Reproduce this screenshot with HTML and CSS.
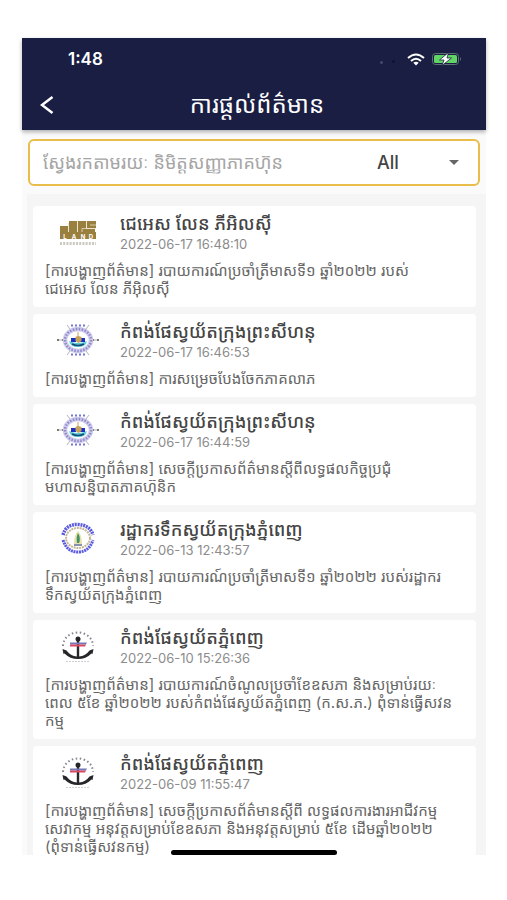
FILE: index.html
```html
<!DOCTYPE html>
<html lang="km">
<head>
<meta charset="utf-8">
<meta name="viewport" content="width=device-width, initial-scale=1">
<title>ការផ្ដល់ព័ត៌មាន</title>
<link rel="stylesheet" href="styles.css">
</head>
<body>
<svg class="defs" aria-hidden="true">
  <defs>
    <symbol id="logo-land" viewBox="0 0 42 36">
      <path fill="#9a803f" d="M3 12h8v9H3zM12 7h8v14h-8zM21 7h8v8h9v6H21zM30 7h9v7h-9zM3 18h36v7H3z"/>
      <path d="M11.500 9v9M20.500 7v11M29.500 7v7.500H39M25 18v-3.500h5M33 11h6" fill="none" stroke="#e9dfc3" stroke-width=".8"/>
      <g class="land-word"><text x="8" y="24.500">L</text><text x="17" y="24.500">A</text><text x="26" y="24.500">N</text><text x="34" y="24.500">D</text></g>
      <path d="M3 29.500h36" stroke="#cbc9c0" stroke-width="3" stroke-dasharray="2 1.200"/>
    </symbol>
    <symbol id="logo-port" viewBox="0 0 42 36">
      <path d="M0 18h42M10 3l22 30M32 3L10 33" stroke="#b4b6b0" stroke-width="1"/>
      <path d="M0 18h2M40 18h2M5 18h2M35 18h2" stroke="#77796f" stroke-width="2"/>
      <path d="M14 3.500h14M14 32.500h14" stroke="#7474d9" stroke-width="2" stroke-dasharray="2 2"/>
      <ellipse cx="21" cy="18" rx="13" ry="11" fill="#fff" stroke="#cfccec" stroke-width="4.500"/>
      <ellipse cx="21" cy="18" rx="13" ry="11" fill="none" stroke="#8f8ac9" stroke-width="2.500" stroke-dasharray="1.500 1.500"/>
      <path d="M12 19q9 4 18 0-1 6-9 6t-9-6z" fill="#62cbd8"/>
      <path d="M14 16h5v4h-5zM23 16h5v4h-5z" fill="#1930c4"/>
      <path d="M20.500 10h1v4l3 1v4l-3 2-3-2v-4l2-1z" fill="#c6a15c"/>
      <path d="M15 22q6 3 12 0" fill="none" stroke="#164c76" stroke-width="1.500"/>
    </symbol>
    <symbol id="logo-water" viewBox="0 0 42 36">
      <path d="M6 15Q9 4 21 4.500T36 15" fill="none" stroke="#5b5bdf" stroke-width="3.500" stroke-dasharray="2 .8"/>
      <path d="M6 20q4 12 15 12t15-12" fill="none" stroke="#5b5be2" stroke-width="3" stroke-dasharray="2 .7"/>
      <ellipse cx="21" cy="18" rx="12" ry="10" fill="#fff" stroke="#c4b796" stroke-width="2" stroke-dasharray="2 .8"/>
      <path d="M17 24q0-9 4-13 4 4 4 13z" fill="#e8e1ad"/>
      <path d="M20 23q-1-6 1-10 3 5 1 10z" fill="#449263"/>
      <path d="M17 25h8" stroke="#3a4976" stroke-width="1.200"/>
    </symbol>
    <symbol id="logo-anchor" viewBox="0 0 42 36">
      <path d="M6 18C7 0 35 0 36 18" fill="none" stroke="#85838f" stroke-width="2" stroke-dasharray="1.500 2.500"/>
      <path d="M5.500 21l4 1.500q4 5.500 10.300 6V11h2.400v17.500q6.300-.5 10.300-6l4-1.500-1 5-1-.5q-5.500 5.500-13.500 5.500T7.500 25.500l-1 .5z" fill="#25252a"/>
      <circle cx="21" cy="11" r="2.500" fill="#25252a"/>
      <path d="M13 14.500h17l-1 2H13z" fill="#7479b8"/>
      <path d="M13 16.500h16l-1 2H13z" fill="#d84962"/>
      <path d="M9 33.500h24" stroke="#d0d0d3" stroke-width="1.200" stroke-dasharray="2 1"/>
    </symbol>
  </defs>
</svg>
<div class="phone">
  <header class="top">
    <div class="status">
      <span class="time">1:48</span>
      <span class="dots"></span>
      <svg class="wifi" viewBox="0 0 18 13" aria-hidden="true"><g fill="none" stroke="#fff" stroke-width="2"><path d="M1 5q8-7 16 0"/><path d="M4 8q5-4.500 10 0"/></g><path d="M6.300 9.800q2.700-2 5.400 0L9 12.500z" fill="#fff"/></svg>
      <svg class="battery" viewBox="0 0 30 14" aria-hidden="true"><rect x=".5" y="1.500" width="26" height="11" rx="3" fill="none" stroke="#5b7073"/><rect x="2" y="3" width="23" height="8" rx="1.500" fill="#60d565"/><path d="M28 5q2 2 0 4z" fill="#5b7073"/><path d="M16.500 .5L7.500 8h4.500l-2 5.500L19.500 6H15z" fill="#fff" stroke="#1a1e42" stroke-width=".8"/></svg>
    </div>
    <div class="bar">
      <button class="back" type="button" aria-label="Back"><svg viewBox="0 0 14 18" aria-hidden="true"><path d="M12.500 1L2 9l10.500 8" fill="none" stroke="#fff" stroke-width="2.500"/></svg></button>
      <h1>ការផ្ដល់ព័ត៌មាន</h1>
    </div>
  </header>
  <form class="search">
    <input type="text" aria-label="Search" placeholder="ស្វែងរកតាមរយៈ និមិត្តសញ្ញាភាគហ៊ុន">
    <select aria-label="Filter"><option>All</option></select>
    <svg class="caret" viewBox="0 0 10 5" aria-hidden="true"><path d="M0 0h10L5 5z" fill="#666"/></svg>
  </form>
  <main class="list">
    <article class="card">
      <svg class="logo" aria-hidden="true"><use href="#logo-land"/></svg>
      <h2>ជេអេស លែន ភីអិលស៊ី</h2>
      <time>2022-06-17 16:48:10</time>
      <p>[ការបង្ហាញព័ត៌មាន] របាយការណ៍ប្រចាំត្រីមាសទី១ ឆ្នាំ២០២២ របស់<br>ជេអេស លែន ភីអ៊ិលស៊ី</p>
    </article>
    <article class="card">
      <svg class="logo" aria-hidden="true"><use href="#logo-port"/></svg>
      <h2>កំពង់ផែស្វយ័តក្រុងព្រះសីហនុ</h2>
      <time>2022-06-17 16:46:53</time>
      <p>[ការបង្ហាញព័ត៌មាន] ការសម្រេចបែងចែកភាគលាភ</p>
    </article>
    <article class="card">
      <svg class="logo" aria-hidden="true"><use href="#logo-port"/></svg>
      <h2>កំពង់ផែស្វយ័តក្រុងព្រះសីហនុ</h2>
      <time>2022-06-17 16:44:59</time>
      <p>[ការបង្ហាញព័ត៌មាន] សេចក្ដីប្រកាសព័ត៌មានស្ដីពីលទ្ធផលកិច្ចប្រជុំ<br>មហាសន្និបាតភាគហ៊ុនិក</p>
    </article>
    <article class="card">
      <svg class="logo" aria-hidden="true"><use href="#logo-water"/></svg>
      <h2>រដ្ឋាករទឹកស្វយ័តក្រុងភ្នំពេញ</h2>
      <time>2022-06-13 12:43:57</time>
      <p>[ការបង្ហាញព័ត៌មាន] របាយការណ៍ប្រចាំត្រីមាសទី១ ឆ្នាំ២០២២ របស់រដ្ឋាករ<br>ទឹកស្វយ័តក្រុងភ្នំពេញ</p>
    </article>
    <article class="card">
      <svg class="logo" aria-hidden="true"><use href="#logo-anchor"/></svg>
      <h2>កំពង់ផែស្វយ័តភ្នំពេញ</h2>
      <time>2022-06-10 15:26:36</time>
      <p>[ការបង្ហាញព័ត៌មាន] របាយការណ៍ចំណូលប្រចាំខែឧសភា និងសម្រាប់រយៈ<br>ពេល ៥ខែ ឆ្នាំ២០២២ របស់កំពង់ផែស្វយ័តភ្នំពេញ (ក.ស.ភ.) ពុំទាន់ធ្វើសវន<br>កម្ម</p>
    </article>
    <article class="card last">
      <svg class="logo" aria-hidden="true"><use href="#logo-anchor"/></svg>
      <h2>កំពង់ផែស្វយ័តភ្នំពេញ</h2>
      <time>2022-06-09 11:55:47</time>
      <p>[ការបង្ហាញព័ត៌មាន] សេចក្ដីប្រកាសព័ត៌មានស្ដីពី លទ្ធផលការងារអាជីវកម្ម<br>សេវាកម្ម អនុវត្តសម្រាប់ខែឧសភា និងអនុវត្តសម្រាប់ ៥ខែ ដើមឆ្នាំ២០២២<br>(ពុំទាន់ធ្វើសវនកម្ម)</p>
    </article>
  </main>
  <div class="home"></div>
</div>
</body>
</html>
```
FILE: styles.css
```css
* { box-sizing: border-box; }
body {
  margin: 0;
  padding: 38px 21px 0 22px;
  background: #fff;
  font-family: Inter, "Noto Sans Khmer", "Khmer OS", sans-serif;
  color: #666;
}
.defs { position: absolute; width: 0; height: 0; }
.land-word { font-size: 6px; font-weight: 700; text-anchor: middle; fill: #fff; }
.phone { background: #fafafa; }
.top {
  position: relative;
  background: #1a1e42;
  color: #fff;
  box-shadow: 0 2px 4px rgba(0, 0, 0, .3);
}
.status {
  display: flex;
  align-items: center;
  height: 42px;
  padding: 0 24px 0 46px;
}
.time { font-size: 17px; font-weight: 600; }
.dots {
  width: 3px;
  height: 3px;
  margin: 6px 24px 0 auto;
  border-radius: 50%;
  background: #454a69;
  box-shadow: 12px -1px 0 #101330;
}
.wifi { width: 18px; height: 13px; margin-right: 7px; }
.battery { width: 30px; height: 14px; }
.bar {
  display: grid;
  grid-template-columns: 48px 1fr 42px;
  align-items: center;
  height: 50px;
}
.back {
  height: 40px;
  padding: 0 0 0 18px;
  border: 0;
  background: none;
  text-align: left;
}
.back svg { display: block; width: 14px; height: 18px; }
h1 {
  margin: 0;
  font-size: 24px;
  font-weight: 400;
  line-height: 36px;
  text-align: center;
  white-space: nowrap;
}
.search {
  display: flex;
  align-items: center;
  height: 47px;
  margin: 9px 6px 8px;
  padding: 0 19px 0 13px;
  border: 2px solid #e9bd49;
  border-radius: 6px;
  background: #fff;
}
.search input {
  flex: 1;
  min-width: 0;
  height: 40px;
  padding: 0;
  border: 0;
  outline: 0;
  background: none;
  font: 18px/36px Inter, "Noto Sans Khmer", "Khmer OS", sans-serif;
}
.search input::placeholder { color: #a5a5a5; opacity: 1; }
.search select {
  width: 72px;
  padding: 0;
  border: 0;
  appearance: none;
  background: none;
  color: #444;
  font: 500 18px/24px Inter, sans-serif;
}
.caret { width: 10px; height: 5px; }
.list {
  display: flex;
  flex-direction: column;
  gap: 7px;
  margin: 0 0 0 5px;
  padding: 12px 10px 0 6px;
  background: #f5f5f5;
}
.card {
  display: grid;
  grid-template-columns: 87px 1fr;
  grid-template-rows: 30px 16px auto;
  padding: 0 8px 9px 0;
  border-radius: 4px;
  background: #fff;
}
.card.last { padding-bottom: 0; }
.logo {
  grid-row: 1 / 3;
  width: 42px;
  height: 36px;
  margin: 8px 0 0 24px;
}
h2 {
  margin: 6px 0 0;
  font-size: 18px;
  font-weight: 500;
  line-height: 24px;
  color: #444;
  white-space: nowrap;
}
time {
  font-size: 13px;
  line-height: 16px;
  color: #8c8c8c;
}
.card p {
  grid-column: 1 / 3;
  margin: 10px 0 0;
  padding-left: 12px;
  font-size: 15px;
  line-height: 18px;
  white-space: nowrap;
}
.home {
  position: relative;
  width: 166px;
  height: 5px;
  margin: -6px auto 0;
  border-radius: 3px;
  background: #000;
}
```
